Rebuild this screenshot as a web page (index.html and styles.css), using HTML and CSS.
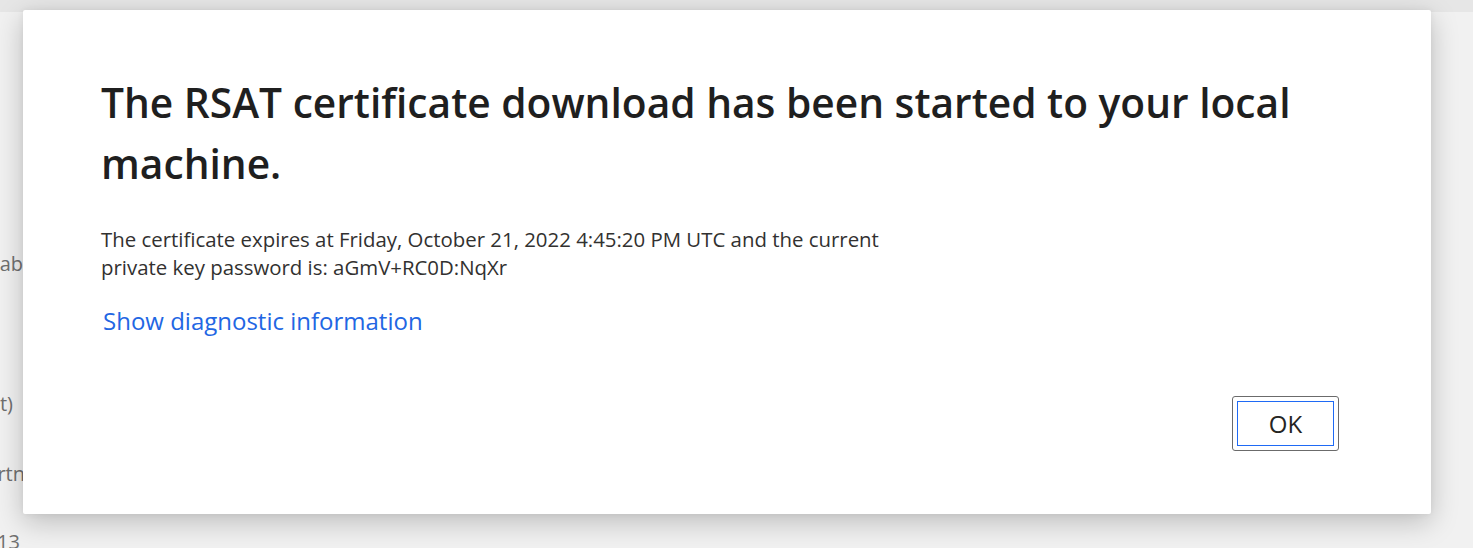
FILE: index.html
```html
<!DOCTYPE html>
<html lang="en">
<head>
<meta charset="utf-8">
<title>RSAT certificate</title>
<link rel="stylesheet" href="styles.css">
</head>
<body>
<div class="page">
  <div class="topbar"></div>
  <div class="labels">
    <div class="label l1">Enab</div>
    <div class="label l2">(Default)</div>
    <div class="label l3">Partn</div>
    <div class="label l4">2013</div>
  </div>
</div>
<div class="dialog" role="dialog">
  <h1 class="title">The RSAT certificate download has been started to your local machine.</h1>
  <p class="message">The certificate expires at Friday, October 21, 2022 4:45:20 PM UTC and the current private key password is: aGmV+RC0D:NqXr</p>
  <a class="link" href="#">Show diagnostic information</a>
  <div class="actions">
    <button class="ok"><span class="focus">OK</span></button>
  </div>
</div>
</body>
</html>
```
FILE: styles.css
```css
html, body {
  margin: 0;
  padding: 0;
  height: 100%;
  overflow: hidden;
}
body {
  background: #f1f1f1;
  font-family: "Open Sans", "Noto Sans", sans-serif;
}
.page {
  height: 548px;
}
.topbar {
  height: 12px;
  background: #e6e6e6;
}
.labels {
  width: 23px;
  overflow: hidden;
  padding-top: 238px;
  display: flex;
  flex-direction: column;
  color: #6f6f6f;
  font-size: 20px;
  line-height: 28px;
}
.label {
  display: flex;
  justify-content: flex-end;
  white-space: nowrap;
}
.l1 { margin-bottom: 112px; }
.l2 { padding-right: 10px; margin-bottom: 42px; }
.l3 { margin-right: -2px; margin-bottom: 40px; }
.l4 { padding-right: 3px; }

.dialog {
  position: absolute;
  left: 23px;
  top: 10px;
  width: 1408px;
  height: 504px;
  box-sizing: border-box;
  background: #fff;
  border-radius: 2px;
  box-shadow: 0 8px 28px rgba(0,0,0,0.22), 0 0 6px rgba(0,0,0,0.06);
  padding: 62px 92px 0 78px;
  display: flex;
  flex-direction: column;
  align-items: flex-start;
}
.title {
  margin: 0;
  font-size: 40.7px;
  font-weight: 600;
  line-height: 61px;
  color: #1f1f1f;
}
.message {
  margin: 31px 0 0;
  max-width: 800px;
  font-size: 20.4px;
  line-height: 28px;
  color: #323130;
}
.link {
  margin: 24px 0 0 2px;
  font-size: 24px;
  line-height: 32px;
  color: #2266e3;
  text-decoration: none;
}
.actions {
  align-self: stretch;
  display: flex;
  justify-content: flex-end;
  margin-top: 59px;
}
.ok {
  width: 107px;
  height: 55px;
  padding: 4px;
  box-sizing: border-box;
  background: #fff;
  border: 1px solid #6b6b6b;
  border-radius: 3px;
  font-family: inherit;
  display: flex;
}
.focus {
  flex: 1;
  display: flex;
  align-items: center;
  justify-content: center;
  border: 1px solid #1f6af5;
  font-size: 24px;
  color: #252423;
}
```
